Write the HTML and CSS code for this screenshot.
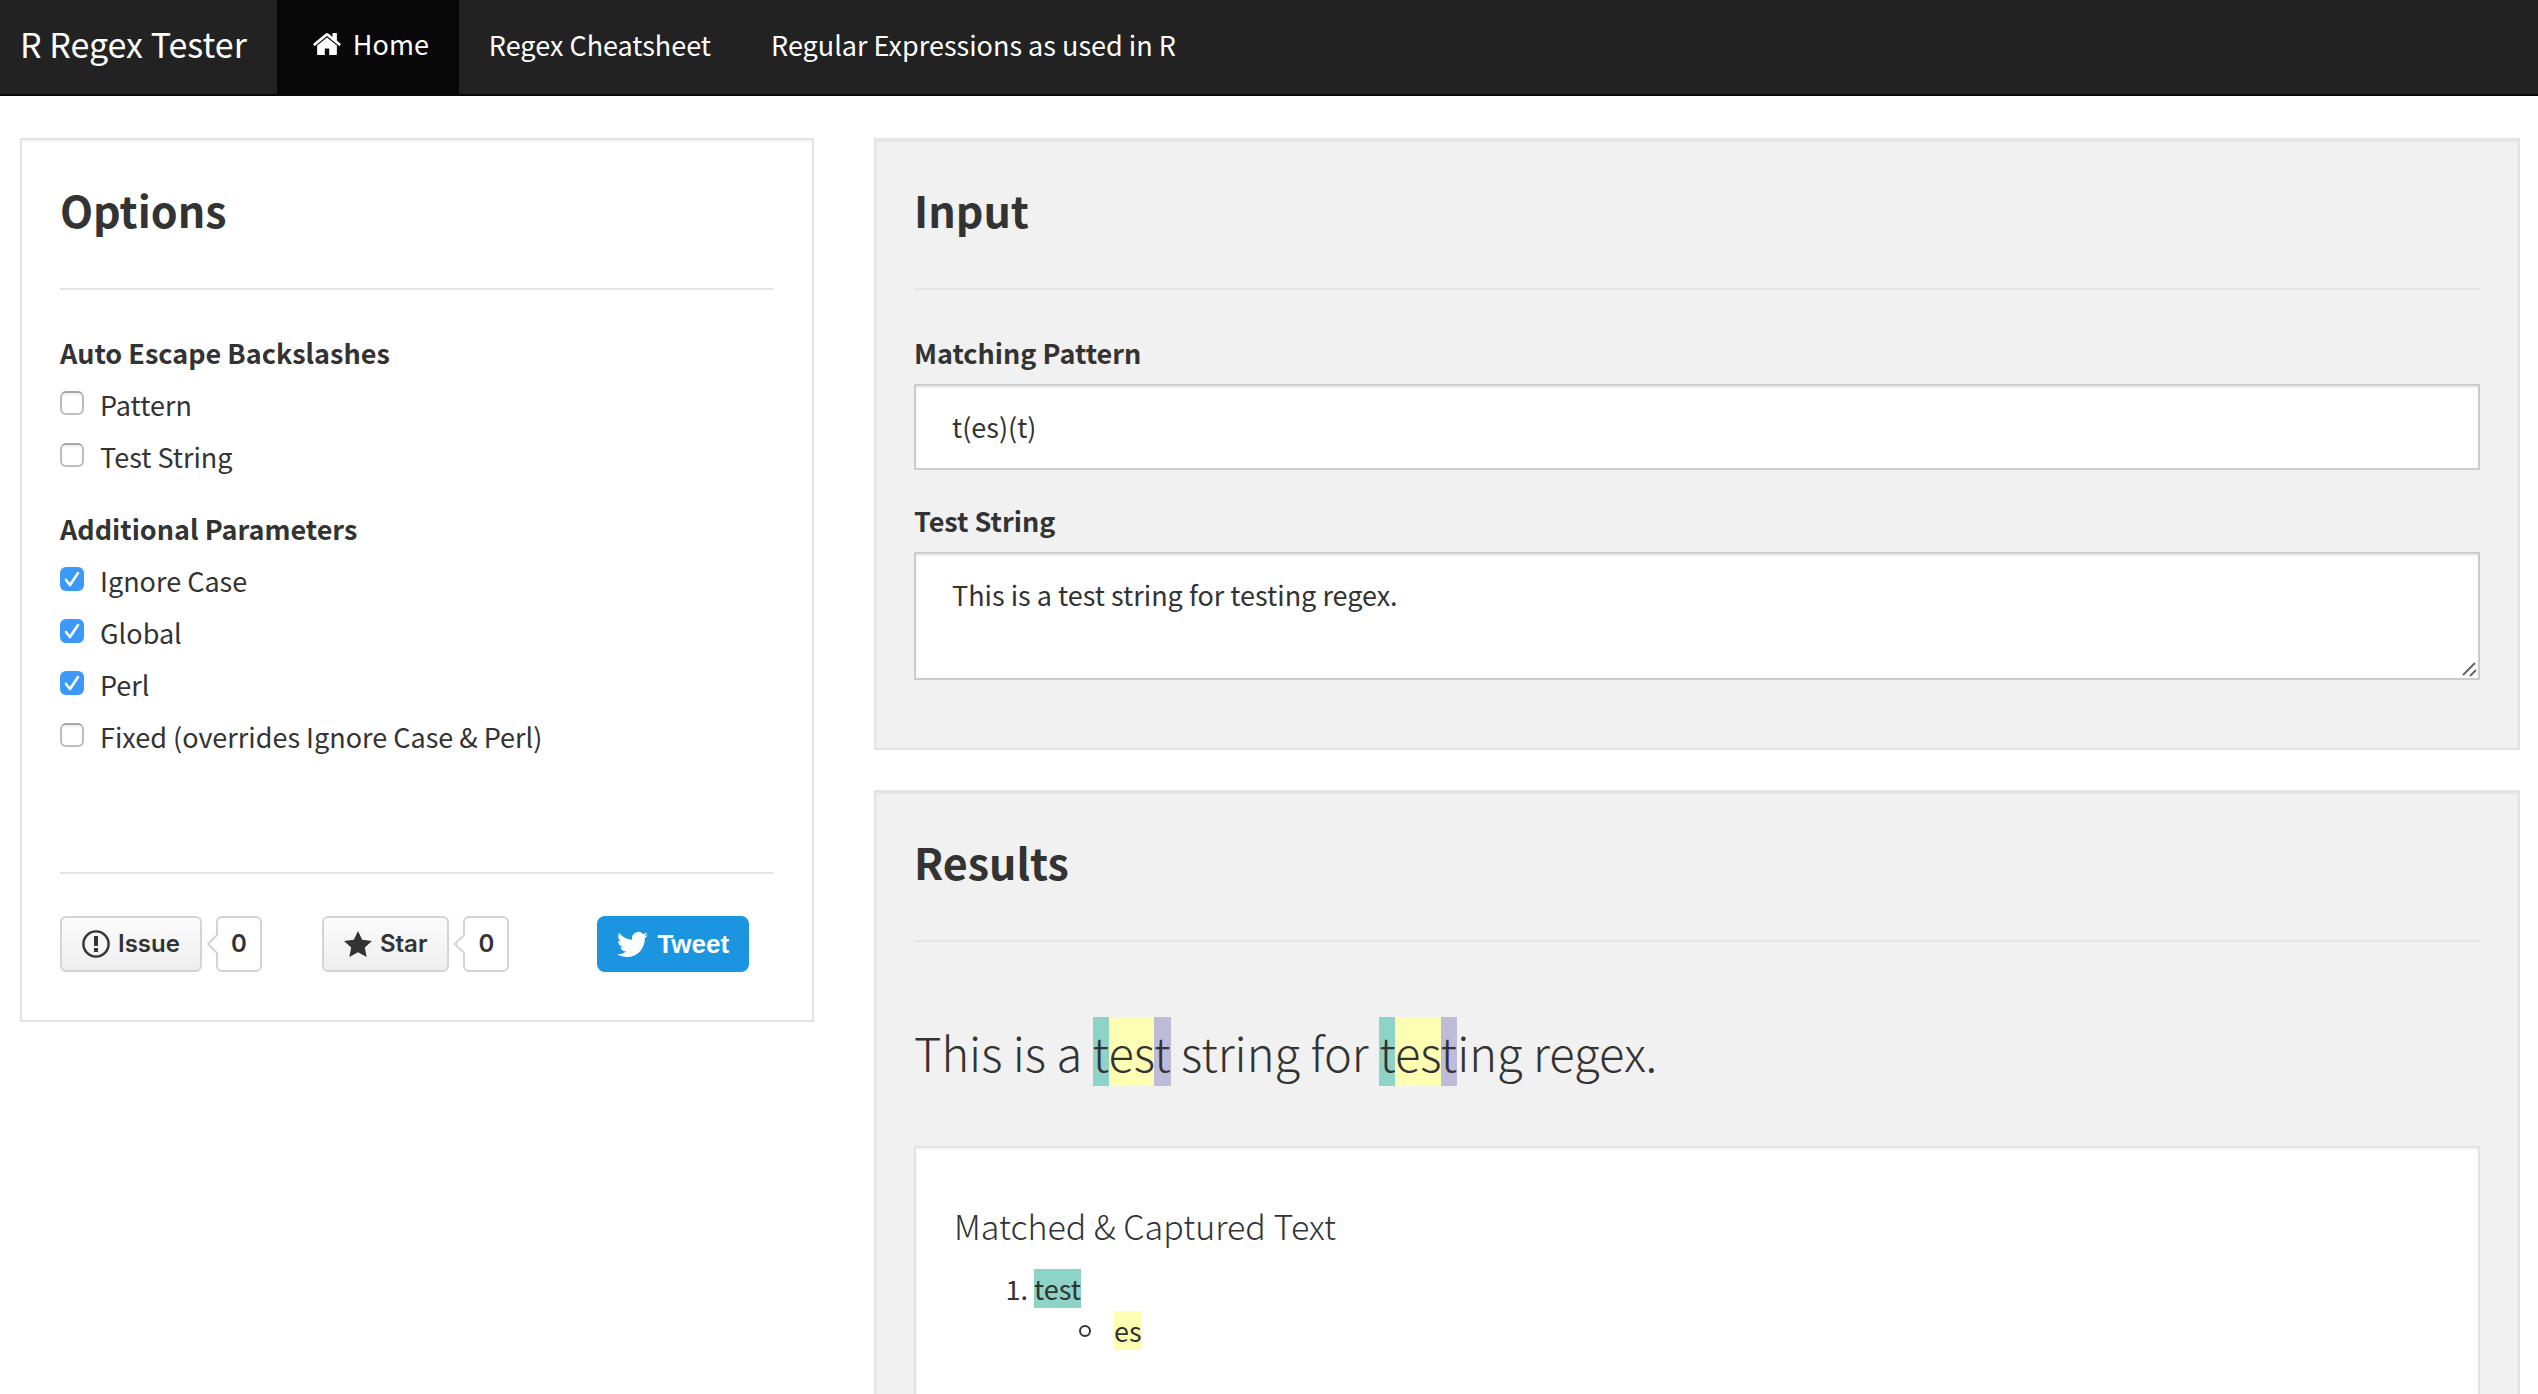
FILE: index.html
```html
<!DOCTYPE html>
<html lang="en">
<head>
<meta charset="utf-8">
<title>R Regex Tester</title>
<meta name="viewport" content="width=device-width, initial-scale=1">
<link rel="stylesheet" href="styles.css">
</head>
<body>
<nav class="navbar">
  <a class="brand" href="#">R Regex Tester</a>
  <a class="nav-link active" href="#home">
    <svg class="home-icon" viewBox="24 253 1616 1283" aria-hidden="true"><path d="M1408 992v480q0 26-19 45t-45 19h-384v-384h-256v384h-384q-26 0-45-19t-19-45v-480q0-1 .5-3t.5-3l575-474 575 474q1 2 1 6zm223-69l-62 74q-8 9-21 11h-3q-13 0-21-7l-692-577-692 577q-12 8-24 7-13-2-21-11l-62-74q-8-10-7-23.5t11-21.5l719-599q32-26 76-26t76 26l244 204v-195q0-14 9-23t23-9h192q14 0 23 9t9 23v408l219 182q10 8 11 21.5t-7 23.5z"/></svg>
    Home
  </a>
  <a class="nav-link" href="#cheatsheet">Regex Cheatsheet</a>
  <a class="nav-link" href="#regex">Regular Expressions as used in R</a>
</nav>

<main class="layout">
  <form class="panel options">
    <h2 class="panel-title">Options</h2>
    <hr>
    <fieldset class="group">
      <legend class="group-label">Auto Escape Backslashes</legend>
      <label class="check"><input type="checkbox">Pattern</label>
      <label class="check"><input type="checkbox">Test String</label>
    </fieldset>
    <fieldset class="group">
      <legend class="group-label">Additional Parameters</legend>
      <label class="check"><input type="checkbox" checked>Ignore Case</label>
      <label class="check"><input type="checkbox" checked>Global</label>
      <label class="check"><input type="checkbox" checked>Perl</label>
      <label class="check"><input type="checkbox">Fixed (overrides Ignore Case &amp; Perl)</label>
    </fieldset>
    <hr class="social-rule">
    <div class="social">
      <div class="counter">
        <button type="button" class="gh-button">
          <svg class="issue-icon" viewBox="0 0 28 28" aria-hidden="true"><circle cx="14" cy="14" r="12.6" fill="none" stroke="#333" stroke-width="2.4"/><path d="M12 6h4v10h-4zM12 18h4v4h-4z"/></svg>
          Issue
        </button>
        <a class="count" href="#issues">0<svg class="count-arrow" viewBox="0 0 11 20" aria-hidden="true"><path d="M11 0L1 10L11 20" fill="#fff" stroke="#d4d4d4" stroke-width="2"/></svg></a>
      </div>
      <div class="counter">
        <button type="button" class="gh-button">
          <svg class="star-icon" viewBox="0 1 14 13" aria-hidden="true"><path d="M14 6l-4.9-.64L7 1 4.9 5.36 0 6l3.6 3.26L2.67 14 7 11.67 11.33 14l-.93-4.74L14 6z"/></svg>
          Star
        </button>
        <a class="count" href="#stars">0<svg class="count-arrow" viewBox="0 0 11 20" aria-hidden="true"><path d="M11 0L1 10L11 20" fill="#fff" stroke="#d4d4d4" stroke-width="2"/></svg></a>
      </div>
      <button type="button" class="tweet">
        <svg class="bird" viewBox="0 2 24 20" aria-hidden="true"><path d="M23.953 4.57a10 10 0 01-2.825.775 4.958 4.958 0 002.163-2.723c-.951.555-2.005.959-3.127 1.184a4.92 4.92 0 00-8.384 4.482C7.69 8.095 4.067 6.13 1.64 3.162a4.822 4.822 0 00-.666 2.475c0 1.71.87 3.213 2.188 4.096a4.904 4.904 0 01-2.228-.616v.06a4.923 4.923 0 003.946 4.827 4.996 4.996 0 01-2.212.085 4.936 4.936 0 004.604 3.417 9.867 9.867 0 01-6.102 2.105c-.39 0-.779-.023-1.17-.067a13.995 13.995 0 007.557 2.209c9.053 0 13.998-7.496 13.998-13.985 0-.21 0-.42-.015-.63A9.935 9.935 0 0024 4.59z"/></svg>
        Tweet
      </button>
    </div>
  </form>

  <div class="workspace">
    <section class="panel shaded">
      <h2 class="panel-title">Input</h2>
      <hr>
      <div class="field">
        <label for="pattern">Matching Pattern</label>
        <input class="control" id="pattern" type="text" value="t(es)(t)">
      </div>
      <div class="field">
        <label for="test-string">Test String</label>
        <div class="resizable">
          <textarea class="control" id="test-string">This is a test string for testing regex.</textarea>
          <svg class="grip" viewBox="0 0 16 16" aria-hidden="true"><path d="M2 14L14 2M9 15L15 9"/></svg>
        </div>
      </div>
    </section>

    <section class="panel shaded results">
      <h2 class="panel-title">Results</h2>
      <hr>
      <p class="match-line">This is a <mark class="m1">t</mark><mark class="m2">es</mark><mark class="m3">t</mark> string for <mark class="m1">t</mark><mark class="m2">es</mark><mark class="m3">t</mark>ing regex.</p>
      <div class="panel captures">
        <h3 class="captures-title">Matched &amp; Captured Text</h3>
        <ol class="matches">
          <li><mark class="m1">test</mark>
            <ul class="groups">
              <li><mark class="m2">es</mark></li>
            </ul>
          </li>
        </ol>
      </div>
    </section>
  </div>
</main>
</body>
</html>
```
FILE: styles.css
```css
*, *::before, *::after { box-sizing: border-box; }

body {
  margin: 0;
  min-height: 100vh;
  display: flex;
  flex-direction: column;
  background: #fff;
  color: #333;
  font: 400 27px/42px "Noto Sans CJK SC", "Noto Sans CJK JP", sans-serif;
}

/* Navigation */
.navbar {
  display: flex;
  height: 96px;
  background: #222;
  border-bottom: 2px solid #090909;
}
.brand, .nav-link {
  display: flex;
  align-items: center;
  padding: 0 30px 4px;
  color: #fff;
  text-decoration: none;
  white-space: nowrap;
}
.brand { padding-left: 20px; padding-bottom: 6px; font-size: 34px; }
.active { padding-bottom: 6px; background: #080808; }
.home-icon { width: 28px; height: 22px; margin: 0 12px 0 6px; fill: #fff; }

/* Columns */
.layout {
  flex: 1;
  display: grid;
  grid-template-columns: minmax(0, 794fr) minmax(0, 1646fr);
  gap: 60px;
  padding: 42px 18px 0 20px;
}
.workspace { display: flex; flex-direction: column; gap: 40px; }

.panel {
  padding: 38px;
  background: #fff;
  border: 2px solid #e3e3e3;
  box-shadow: inset 0 2px 2px rgba(0, 0, 0, .05);
}
.shaded { background: #f1f1f1; }
.options { align-self: start; padding-bottom: 48px; }
.panel-title {
  margin: 6px 0 54px;
  font-size: 43px;
  line-height: 50px;
  font-weight: 700;
}
hr {
  height: 2px;
  margin: 0 0 42px;
  border: 0;
  background: #e5e5e5;
}

/* Options */
.group { display: flex; flex-direction: column; gap: 10px; margin: 0 0 30px; padding: 0; border: 0; min-width: 0; }
.group-label { float: left; padding: 0; font-weight: 700; }
.check { display: flex; align-items: flex-start; }
.check input {
  appearance: none;
  flex: none;
  width: 24px;
  height: 24px;
  margin: 7px 16px 0 0;
  border: 2px solid #bdbdbd;
  border-top-color: #a6a6a6;
  border-radius: 6px;
  background: #fff;
  box-shadow: inset 0 2px 2px rgba(0, 0, 0, .06);
}
.check input:checked {
  border: 0;
  box-shadow: none;
  background: #3b99fc url("data:image/svg+xml,%3Csvg xmlns='http://www.w3.org/2000/svg' viewBox='0 0 24 24'%3E%3Cpath d='M6 13L10 18L18 6' fill='none' stroke='white' stroke-width='2.6' stroke-linecap='round' stroke-linejoin='round'/%3E%3C/svg%3E");
}
.social-rule { margin-top: 114px; }

/* Social buttons */
.social { display: flex; flex-wrap: wrap; gap: 60px; }
.counter { display: flex; gap: 14px; }
.gh-button, .count, .tweet {
  display: flex;
  align-items: center;
  justify-content: center;
  height: 56px;
  border: 2px solid #d4d4d4;
  border-radius: 6px;
  color: #333;
  font: 600 24px/32px Inter, sans-serif;
  text-decoration: none;
}
.gh-button { gap: 8px; padding: 0 20px; background: linear-gradient(#fcfcfc, #eee); fill: #333; }
.issue-icon { width: 28px; height: 28px; }
.star-icon { width: 28px; height: 26px; }
.count { position: relative; width: 46px; background: #fff; }
.count-arrow { position: absolute; left: -11px; top: 16px; width: 11px; height: 20px; }
.tweet {
  gap: 9px;
  margin-left: 28px;
  padding: 0 20px;
  border: 0;
  border-radius: 8px;
  background: #1b95e0;
  color: #fff;
  fill: #fff;
  font: 700 26px/32px "Liberation Sans", Arial, sans-serif;
}
.bird { width: 31px; height: 27px; }

/* Input */
.field { display: flex; flex-direction: column; gap: 10px; margin-bottom: 30px; }
.field label { font-weight: 700; }
.control {
  display: block;
  width: 100%;
  height: 86px;
  margin: 0;
  padding: 20px 36px 22px;
  border: 2px solid #ccc;
  border-radius: 0;
  background: #fff;
  box-shadow: inset 0 2px 2px rgba(0, 0, 0, .075);
  color: #333;
  font: inherit;
}
.resizable { position: relative; }
textarea.control { height: 128px; resize: vertical; }
textarea::-webkit-resizer { display: none; }
.grip {
  position: absolute;
  right: 3px;
  bottom: 3px;
  width: 16px;
  height: 16px;
  fill: none;
  stroke: #666;
  stroke-width: 2;
  pointer-events: none;
}

/* Results */
.results { flex: 1; display: flex; flex-direction: column; padding-bottom: 0; border-bottom: 0; }
mark { color: inherit; }
.m1 { background: #8dd3c7; }
.m2 { background: #ffffb3; }
.m3 { background: #bebada; }
.match-line { margin: 35px 0 61px; font-size: 47px; line-height: 66px; font-weight: 300; }
.captures { flex: 1; border-bottom: 0; padding-bottom: 0; }
.captures-title { margin: 16px 0 18px; font-size: 34px; line-height: 48px; font-weight: 300; }
.matches, .groups { margin: 0; padding-left: 80px; }
.groups { list-style: none; }
.groups li { position: relative; }
.groups li::before {
  content: "";
  position: absolute;
  left: -35px;
  top: 15px;
  width: 12px;
  height: 12px;
  border: 2px solid #333;
  border-radius: 50%;
}
```
